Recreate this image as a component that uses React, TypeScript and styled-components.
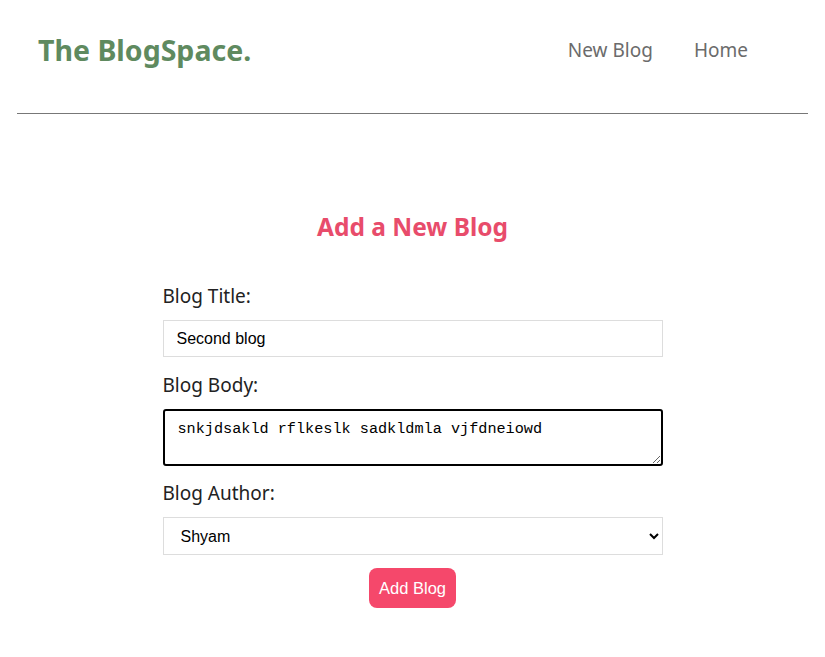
import styled, { createGlobalStyle } from "styled-components";

const GlobalStyle = createGlobalStyle`
  body {
    margin: 0;
    background: #fff;
    font-family: "Noto Sans", "Open Sans", sans-serif;
    color: #333;
  }
  * {
    box-sizing: border-box;
  }
`;

const Page = styled.div`
  width: 100%;
`;

const Navbar = styled.nav`
  display: flex;
  align-items: center;
  height: 114px;
  margin: 0 17px;
  padding: 0 60px 14px 21px;
  border-bottom: 1px solid #777;
`;

const Logo = styled.h1`
  margin: 0;
  font-size: 28.5px;
  font-weight: 700;
  color: #5f8a5f;
`;

const Links = styled.div`
  margin-left: auto;
  display: flex;
  gap: 41px;
`;

const NavLink = styled.a`
  font-size: 19px;
  color: #6b6b6b;
  text-decoration: none;
`;

const Create = styled.div`
  width: 500px;
  margin: 96px auto 0;
  text-align: center;
`;

const Heading = styled.h2`
  margin: 0 0 37px;
  font-size: 24.5px;
  line-height: 34px;
  font-weight: 700;
  color: #e84c6b;
`;

const Form = styled.form`
  display: flex;
  flex-direction: column;
  align-items: stretch;
`;

const Label = styled.label`
  display: block;
  text-align: left;
  font-size: 19px;
  color: #222;
  line-height: 30px;
`;

const fieldBase = `
  width: 100%;
  margin: 9px 0 13px;
  font-family: "Liberation Sans", Arial, sans-serif;
  font-size: 16px;
  color: #000;
  background: #fff;
  border: 1px solid #ddd;
`;

const Input = styled.input`
  ${fieldBase}
  height: 37px;
  padding: 0 13px;
`;

const TextArea = styled.textarea`
  ${fieldBase}
  height: 57px;
  margin-bottom: 12px;
  padding: 9px 13px;
  border: 2px solid #000;
  border-radius: 3px;
  outline: none;
  font-family: "Liberation Mono", "DejaVu Sans Mono", monospace;
  font-size: 15.2px;
  resize: vertical;
`;

const Select = styled.select`
  ${fieldBase}
  height: 38px;
  padding: 0 13px;
`;

const SubmitButton = styled.button`
  align-self: center;
  background: #f5486b;
  color: #fff;
  border: 0;
  border-radius: 8px;
  height: 40px;
  padding: 0 10px;
  font-family: "Liberation Sans", Arial, sans-serif;
  font-size: 16.5px;
  cursor: pointer;
`;

export default function App() {
  return (
    <Page>
      <GlobalStyle />
      <Navbar>
        <Logo>The BlogSpace.</Logo>
        <Links>
          <NavLink href="#">New Blog</NavLink>
          <NavLink href="#">Home</NavLink>
        </Links>
      </Navbar>
      <Create>
        <Heading>Add a New Blog</Heading>
        <Form onSubmit={(e) => e.preventDefault()}>
          <Label>Blog Title:</Label>
          <Input type="text" defaultValue="Second blog" />
          <Label>Blog Body:</Label>
          <TextArea
            spellCheck={false}
            defaultValue="snkjdsakld rflkeslk sadkldmla vjfdneiowd"
          />
          <Label>Blog Author:</Label>
          <Select defaultValue="Shyam">
            <option value="Shyam">Shyam</option>
            <option value="Ram">Ram</option>
          </Select>
          <SubmitButton type="submit">Add Blog</SubmitButton>
        </Form>
      </Create>
    </Page>
  );
}
